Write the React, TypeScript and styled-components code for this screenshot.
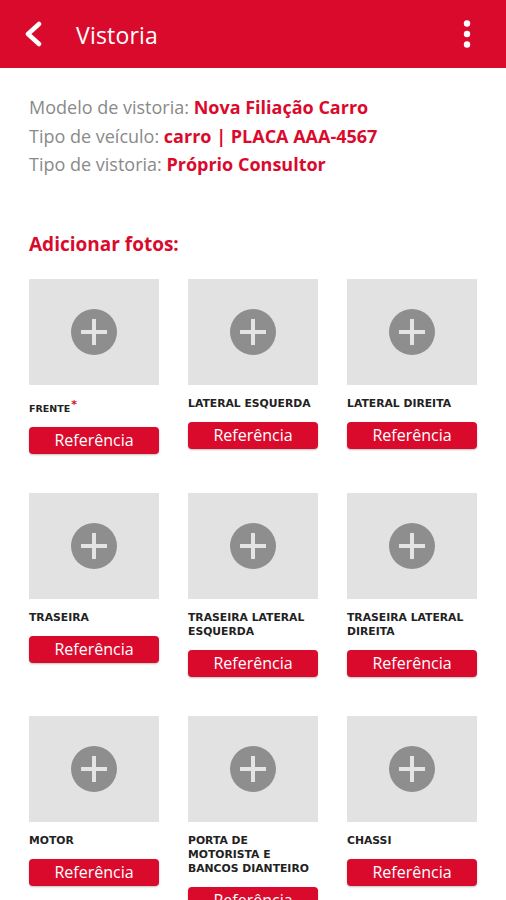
import React from 'react'
import styled, { createGlobalStyle } from 'styled-components'

const RED = '#da0a2d'

const GlobalStyle = createGlobalStyle`
  * { box-sizing: border-box; }
  body {
    margin: 0;
    background: #ffffff;
    font-family: "Open Sans", "Noto Sans", sans-serif;
  }
`

const Page = styled.div`
  width: 506px;
  min-height: 900px;
  background: #fff;
  overflow: hidden;
`

const AppBar = styled.header`
  height: 68px;
  background: ${RED};
  display: flex;
  align-items: center;
  padding: 0 35px 0 22px;
  color: #fff;
`

const IconButton = styled.button`
  background: none;
  border: none;
  padding: 0;
  display: flex;
  align-items: center;
  justify-content: center;
  color: #fff;
  cursor: pointer;
`

const Title = styled.h1`
  flex: 1;
  margin: 0 0 0 30px;
  font-size: 23px;
  font-weight: 400;
  letter-spacing: 0.2px;
  line-height: 1;
  padding-top: 3px;
`

const Content = styled.main`
  padding: 25px 28px 0 29px;
`

const InfoList = styled.div`
  display: flex;
  flex-direction: column;
`

const InfoLine = styled.div`
  font-size: 18px;
  line-height: 28.5px;
  color: #8a8a8a;
  white-space: nowrap;
`

const InfoValue = styled.span`
  color: ${RED};
  font-weight: 700;
`

const SectionTitle = styled.h2`
  margin: 52px 0 22px;
  font-size: 19px;
  line-height: 26px;
  font-weight: 700;
  color: ${RED};
`

const PhotoGrid = styled.div`
  display: grid;
  grid-template-columns: repeat(3, 130px);
  column-gap: 29px;
  row-gap: 39px;
  align-items: start;
`

const PhotoCell = styled.div`
  display: flex;
  flex-direction: column;
`

const Placeholder = styled.button`
  height: 106px;
  border: none;
  padding: 0;
  background: #e2e2e2;
  display: flex;
  align-items: center;
  justify-content: center;
  cursor: pointer;
`

const PhotoLabel = styled.div<{ $required?: boolean }>`
  margin: ${({ $required }) => ($required ? '17px 0 11px' : '12px 0 11px')};
  font-family: "DejaVu Sans", Verdana, sans-serif;
  font-weight: 700;
  font-size: ${({ $required }) => ($required ? '9.5px' : '10.8px')};
  line-height: 14px;
  color: #222;
  text-transform: uppercase;
`

const Asterisk = styled.span`
  color: ${RED};
  font-size: 11px;
  position: relative;
  top: -4px;
  margin-left: 1px;
`

const RefButton = styled.button`
  height: 27px;
  width: 100%;
  border: none;
  border-radius: 4px;
  background: ${RED};
  color: #fff;
  font-family: "Open Sans", "Noto Sans", sans-serif;
  font-size: 16px;
  line-height: 27px;
  padding: 0;
  box-shadow: 0 1px 2px rgba(0, 0, 0, 0.25);
  cursor: pointer;
`

const BackIcon = () => (
  <svg width="24" height="26" viewBox="0 0 24 26">
    <path
      d="M17 3 L6 13 L17 23"
      fill="none"
      stroke="#fff"
      strokeWidth="4.5"
      strokeLinecap="round"
      strokeLinejoin="round"
    />
  </svg>
)

const MoreIcon = () => (
  <svg width="8" height="30" viewBox="0 0 8 30">
    <circle cx="4" cy="4.5" r="3.2" fill="#fff" />
    <circle cx="4" cy="15" r="3.2" fill="#fff" />
    <circle cx="4" cy="25.5" r="3.2" fill="#fff" />
  </svg>
)

const AddIcon = () => (
  <svg width="46" height="46" viewBox="0 0 46 46">
    <circle cx="23" cy="23" r="23" fill="#8e8e8e" />
    <rect x="10" y="21" width="26" height="4" fill="#e4e4e4" />
    <rect x="21" y="10" width="4" height="26" fill="#e4e4e4" />
  </svg>
)

interface Photo {
  id: string
  label: string
  required?: boolean
}

const photos: Photo[] = [
  { id: 'frente', label: 'Frente', required: true },
  { id: 'lat-esq', label: 'Lateral esquerda' },
  { id: 'lat-dir', label: 'Lateral direita' },
  { id: 'traseira', label: 'Traseira' },
  { id: 'tras-lat-esq', label: 'Traseira lateral esquerda' },
  { id: 'tras-lat-dir', label: 'Traseira lateral direita' },
  { id: 'motor', label: 'Motor' },
  { id: 'porta', label: 'Porta de motorista e bancos dianteiro' },
  { id: 'chassi', label: 'Chassi' },
]

export default function App() {
  return (
    <>
      <GlobalStyle />
      <Page>
        <AppBar>
          <IconButton aria-label="Voltar">
            <BackIcon />
          </IconButton>
          <Title>Vistoria</Title>
          <IconButton aria-label="Mais opções">
            <MoreIcon />
          </IconButton>
        </AppBar>

        <Content>
          <InfoList>
            <InfoLine>
              Modelo de vistoria: <InfoValue>Nova Filiação Carro</InfoValue>
            </InfoLine>
            <InfoLine>
              Tipo de veículo: <InfoValue>carro | PLACA AAA-4567</InfoValue>
            </InfoLine>
            <InfoLine>
              Tipo de vistoria: <InfoValue>Próprio Consultor</InfoValue>
            </InfoLine>
          </InfoList>

          <SectionTitle>Adicionar fotos:</SectionTitle>

          <PhotoGrid>
            {photos.map(photo => (
              <PhotoCell key={photo.id}>
                <Placeholder aria-label={`Adicionar ${photo.label}`}>
                  <AddIcon />
                </Placeholder>
                <PhotoLabel $required={photo.required}>
                  {photo.label}
                  {photo.required && <Asterisk>*</Asterisk>}
                </PhotoLabel>
                <RefButton>Referência</RefButton>
              </PhotoCell>
            ))}
          </PhotoGrid>
        </Content>
      </Page>
    </>
  )
}
